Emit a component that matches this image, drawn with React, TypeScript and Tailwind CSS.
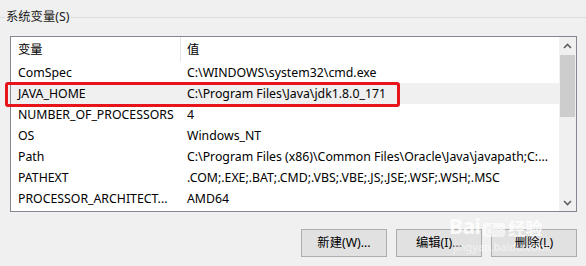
import React from "react";

const rows: [string, string][] = [
  ["ComSpec", "C:\\WINDOWS\\system32\\cmd.exe"],
  ["JAVA_HOME", "C:\\Program Files\\Java\\jdk1.8.0_171"],
  ["NUMBER_OF_PROCESSORS", "4"],
  ["OS", "Windows_NT"],
  ["Path", "C:\\Program Files (x86)\\Common Files\\Oracle\\Java\\javapath;C:..."],
  ["PATHEXT", ".COM;.EXE;.BAT;.CMD;.VBS;.VBE;.JS;.JSE;.WSF;.WSH;.MSC"],
  ["PROCESSOR_ARCHITECT...", "AMD64"],
];

function Chevron({ up }: { up?: boolean }) {
  return (
    <svg width="9" height="6" viewBox="0 0 9 6">
      <path
        d={up ? "M1 5 L4.5 1.5 L8 5" : "M1 1 L4.5 4.5 L8 1"}
        fill="none"
        stroke="#606060"
        strokeWidth="1.6"
      />
    </svg>
  );
}

export default function App() {
  return (
    <div
      className="relative w-[586px] h-[266px] overflow-hidden bg-[#f0f0f0] text-[12.3px] text-black"
      style={{ fontFamily: '"Noto Sans", "Noto Sans CJK SC", sans-serif' }}
    >
      {/* group box title */}
      <div className="flex items-center pt-[9px] h-[25px]">
        <div className="w-[5px] h-px bg-[#dcdcdc]" />
        <span className="px-[1px] leading-[16px] text-[#1a1a1a]">系统变量(S)</span>
        <div className="flex-1 h-px bg-[#dcdcdc] ml-[1px]" />
      </div>

      {/* list */}
      <div className="relative mt-[11px] ml-[10px] w-[567px] h-[176px] border border-[#828790] bg-white flex">
        <div className="flex-1 flex flex-col">
          <div className="flex h-[25px] items-center">
            <div className="w-[169px] pl-[7px] leading-[25px]">变量</div>
            <div className="w-px h-[25px] bg-[#e5e5e5]" />
            <div className="pl-[6px] leading-[25px]">值</div>
          </div>
          {rows.map(([k, v], i) => (
            <div
              key={k}
              className={
                "flex h-[21px] items-center whitespace-nowrap " +
                (i === 1 ? "bg-[#f0f0f0]" : "")
              }
            >
              <div className="w-[170px] pl-[7px] leading-[21px]">{k}</div>
              <div className="pl-[6px] leading-[21px]">{v}</div>
            </div>
          ))}
        </div>
        <div className="w-[17px] bg-[#f0f0f0] flex flex-col items-center">
          <div className="h-[18px] flex items-center justify-center">
            <Chevron up />
          </div>
          <div className="w-[15px] h-[62px] bg-[#cdcdcd] mr-[1px]" />
          <div className="flex-1" />
          <div className="h-[17px] flex items-center justify-center">
            <Chevron />
          </div>
        </div>
        {/* red highlight box */}
        <div className="absolute left-[-6px] top-[45px] w-[395px] h-[25px] border-[3px] border-[#e8141c] rounded-[3px]" />
      </div>

      {/* buttons */}
      <div className="flex justify-end gap-[9px] pr-[9px] mt-[17px]">
        {["新建(W)...", "编辑(I)...", "删除(L)"].map((b) => (
          <div
            key={b}
            className="w-[86px] h-[28px] border border-[#adadad] bg-[#e1e1e1] flex items-center justify-center"
          >
            {b}
          </div>
        ))}
      </div>

      {/* watermark */}
      <div className="absolute left-[449px] top-[216px] flex flex-col items-start text-white/80 pointer-events-none">
        <div className="flex items-end gap-[3px] leading-none">
          <span className="text-[21px] font-bold tracking-tight">Bai</span>
          <span className="text-[14px] font-bold bg-white/60 text-[#f0f0f0] rounded-[3px] px-[2px]">du</span>
          <span className="text-[17px] font-bold">经验</span>
        </div>
        <div className="text-[11px] leading-none mt-[4px] ml-[4px] text-white/60">jingyan.baidu.com</div>
      </div>
    </div>
  );
}
